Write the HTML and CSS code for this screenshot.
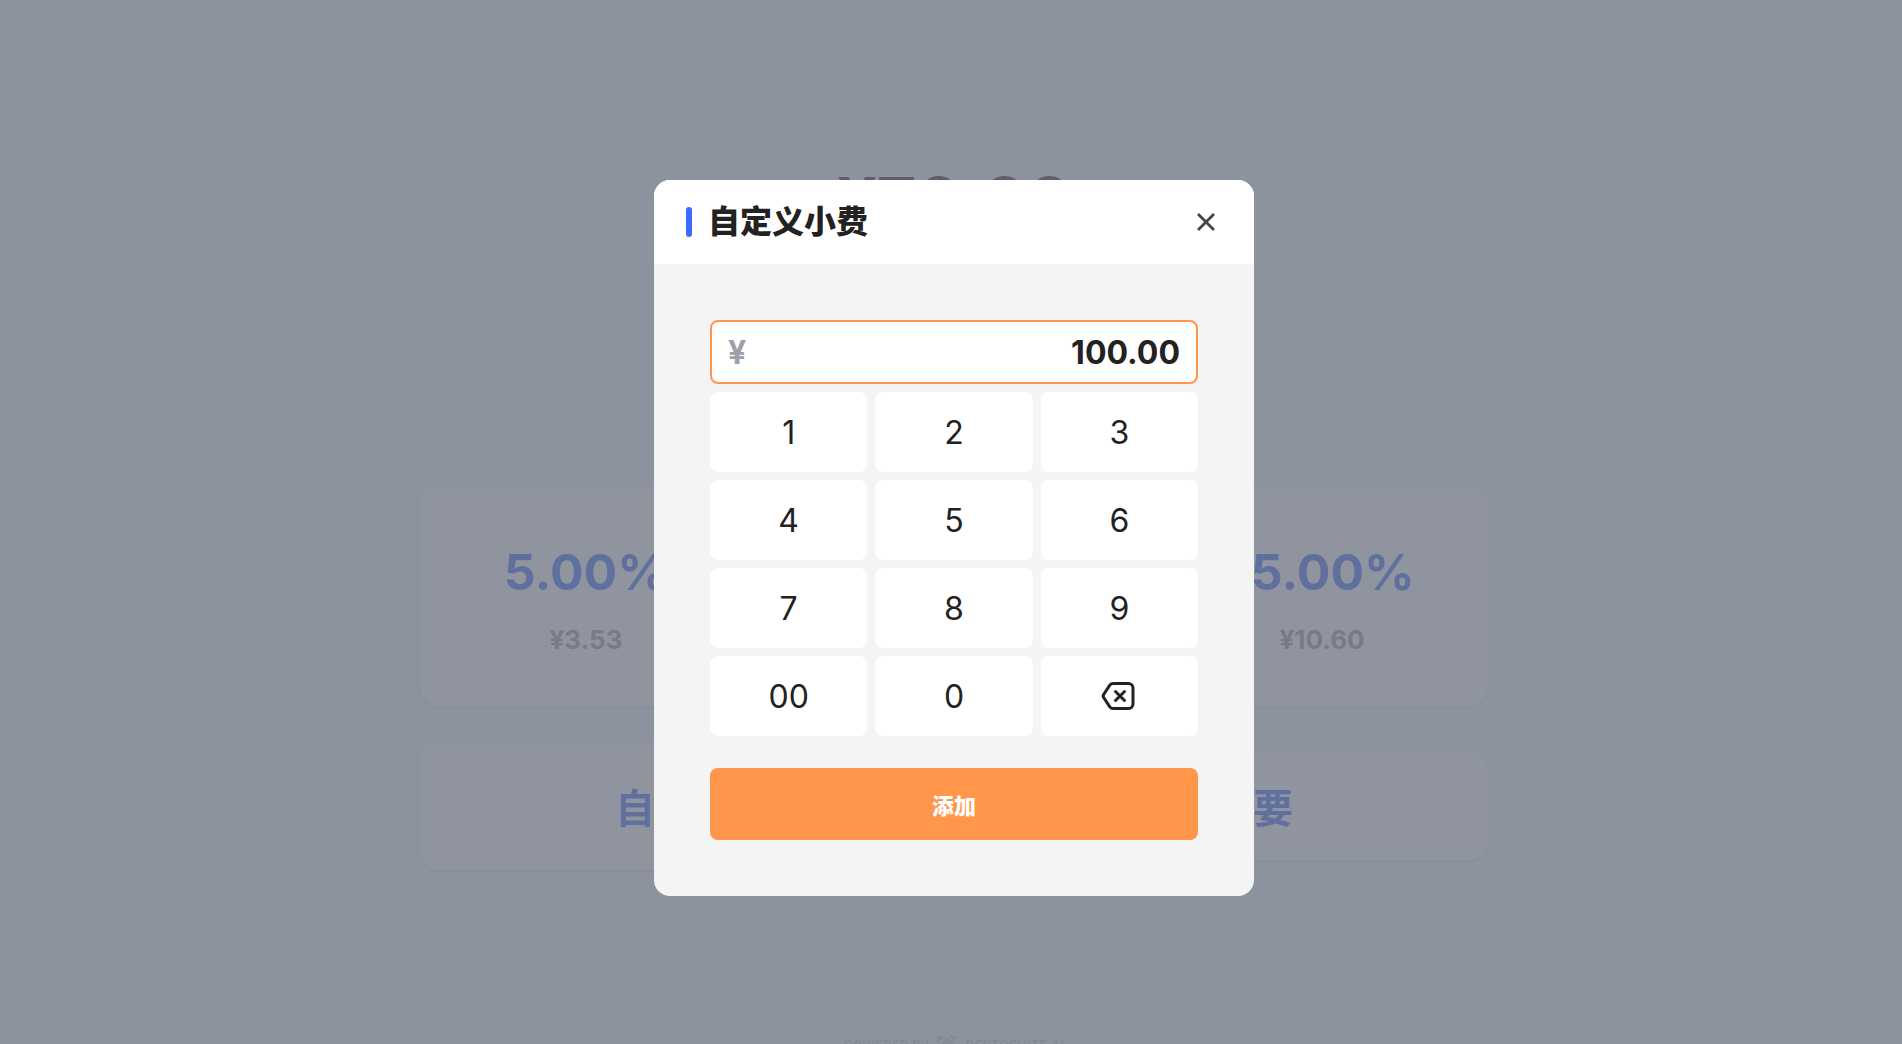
FILE: index.html
```html
<!DOCTYPE html>
<html lang="zh-CN">
<head>
  <meta charset="UTF-8" />
  <meta name="viewport" content="width=device-width, initial-scale=1.0"/>
  <title>自定义小费</title>
  <link rel="stylesheet" href="styles.css">
</head>
<body>
  <main class="page">
    <h1 class="total">¥70.66</h1>

    <div class="tips">
      <button type="button" class="tip"><strong>5.00%</strong><span>¥3.53</span></button>
      <button type="button" class="tip"><strong>10.00%</strong><span>¥7.07</span></button>
      <button type="button" class="tip"><strong>15.00%</strong><span>¥10.60</span></button>
    </div>

    <div class="options">
      <button type="button" class="option custom">自定义</button>
      <button type="button" class="option none">不需要</button>
    </div>

    <footer class="powered">
      <span>POWERED BY</span>
      <svg width="20" height="20" viewBox="0 0 20 20" aria-hidden="true">
        <path d="M0 0h8L0 8zM12 0h8L16 4zM10 1l7 6-8 8-6-6zM0 12l8 8H0zM18 9v11h-8l-1-2z" fill="currentColor"/>
      </svg>
      <span>RESTOSUITE AI</span>
    </footer>
  </main>

  <div class="overlay">
    <div class="modal" role="dialog" aria-modal="true" aria-labelledby="modalTitle">
      <div class="modal-header">
        <h2 id="modalTitle">自定义小费</h2>
        <button type="button" class="close-btn" aria-label="关闭">
          <svg width="32" height="32" viewBox="0 0 32 32" fill="none" stroke="currentColor" stroke-width="2.8">
            <path d="M8 8l16 16M24 8L8 24"/>
          </svg>
        </button>
      </div>

      <form class="modal-body" id="tipForm">
        <div class="amount">
          <label for="amount">¥</label>
          <input type="text" id="amount" value="100.00" inputmode="decimal" autocomplete="off" />
        </div>

        <div class="keypad">
          <button type="button">1</button>
          <button type="button">2</button>
          <button type="button">3</button>
          <button type="button">4</button>
          <button type="button">5</button>
          <button type="button">6</button>
          <button type="button">7</button>
          <button type="button">8</button>
          <button type="button">9</button>
          <button type="button">00</button>
          <button type="button">0</button>
          <button type="button" aria-label="删除">
            <svg width="36" height="36" viewBox="0 0 36 36" fill="none" stroke="currentColor" stroke-width="3" stroke-linecap="round" stroke-linejoin="round">
              <path d="M12 5.500h15.500a4.500 4.500 0 0 1 4.500 4.500v16a4.500 4.500 0 0 1-4.500 4.500H12a4 4 0 0 1-3.200-1.600L3 20a3 3 0 0 1 0-4L8.800 7.100A4 4 0 0 1 12 5.500z"/>
              <path d="M14.500 13.500l9 9M23.500 13.500l-9 9"/>
            </svg>
          </button>
        </div>

        <button type="submit" class="add-btn">添加</button>
      </form>
    </div>
  </div>

  <script>
    const tipForm = document.getElementById("tipForm");
    const amount = document.getElementById("amount");

    // amount is kept in cents, digits are pushed in from the right
    document.querySelectorAll(".keypad button").forEach((key) => {
      key.addEventListener("click", () => {
        const digits = amount.value.replace(/\D/g, "");
        const text = key.textContent.trim();
        const next = text ? digits + text : digits.slice(0, -1);
        amount.value = (Number(next) / 100).toFixed(2);
      });
    });

    tipForm.addEventListener("submit", (e) => e.preventDefault());
  </script>
</body>
</html>
```

FILE: styles.css
```css
* {
  box-sizing: border-box;
}

body {
  margin: 0;
  overflow: hidden;
  font-family: Inter, "Noto Sans CJK SC", sans-serif;
  background: #ecf8ff;
  color: #222;
}

button, input {
  font-family: inherit;
  color: inherit;
}

button {
  border: none;
  cursor: pointer;
}

.page {
  display: flex;
  flex-direction: column;
  max-width: 1074px;
  margin: 0 auto;
  padding: 158px 0 0 6px;
}

.total {
  margin: 0 0 240px;
  font-size: 69px;
  line-height: 88px;
  font-weight: 700;
  text-align: center;
  color: #2c2c34;
}

.tips {
  display: grid;
  grid-template-columns: repeat(3, 1fr);
  gap: 36px;
  margin-bottom: 36px;
}

.tip, .option {
  border-radius: 20px;
  background: #f8fcff;
  color: #3b6cff;
  box-shadow: 0 2px 4px rgba(0, 0, 0, 0.1);
}

.tip {
  display: flex;
  flex-direction: column;
  align-items: center;
  justify-content: center;
  gap: 16px;
  height: 220px;
  padding: 8px 0 0;
}

.tip strong {
  font-size: 50px;
  line-height: 64px;
  font-weight: 700;
}

.tip span {
  font-size: 26px;
  line-height: 40px;
  font-weight: 700;
  color: #9498a4;
}

.options {
  display: grid;
  grid-template-columns: 1fr 1fr;
  align-items: center;
  gap: 48px;
}

.option {
  padding: 0;
  font-size: 40px;
  font-weight: 700;
}

.custom {
  height: 128px;
}

.none {
  height: 108px;
}

.powered {
  display: flex;
  align-items: center;
  justify-content: center;
  gap: 8px;
  margin-top: 164px;
  font-family: Roboto, sans-serif;
  font-size: 14px;
  line-height: 24px;
  font-weight: 700;
  color: #c8d0dc;
}

.overlay {
  position: fixed;
  inset: 0;
  display: flex;
  justify-content: center;
  align-items: flex-start;
  padding: 180px 0 0 6px;
  background: rgba(109, 114, 126, 0.75);
}

.modal {
  width: 600px;
  border-radius: 16px;
  overflow: hidden;
  background: #f4f4f4;
}

.modal-header {
  display: flex;
  align-items: center;
  gap: 16px;
  height: 84px;
  padding: 0 32px;
  background: #fff;
}

.modal-header::before {
  content: "";
  width: 6px;
  height: 30px;
  border-radius: 3px;
  background: #3b6cff;
}

.modal-header h2 {
  flex: 1;
  margin: 0;
  font-size: 32px;
  line-height: 40px;
  font-weight: 900;
}

.close-btn {
  display: flex;
  padding: 0;
  background: none;
  color: #444;
}

.modal-body {
  padding: 56px;
}

.amount {
  display: flex;
  align-items: center;
  height: 64px;
  margin-bottom: 8px;
  padding: 0 16px;
  border: 2px solid #ff964a;
  border-radius: 8px;
  background: #fff;
  font-size: 32px;
  font-weight: 700;
}

.amount label {
  color: #a0a0aa;
}

.amount input {
  flex: 1;
  min-width: 0;
  padding: 0;
  border: none;
  outline: none;
  background: none;
  font-size: 32px;
  font-weight: 700;
  text-align: right;
}

.keypad {
  display: grid;
  grid-template-columns: repeat(3, 1fr);
  gap: 8px;
  margin-bottom: 32px;
}

.keypad button {
  display: flex;
  align-items: center;
  justify-content: center;
  height: 80px;
  border-radius: 8px;
  background: #fff;
  font-size: 32px;
}

.add-btn {
  width: 100%;
  height: 72px;
  border-radius: 8px;
  background: #ff964a;
  color: #fff;
  font-size: 22px;
  font-weight: 900;
}
```
